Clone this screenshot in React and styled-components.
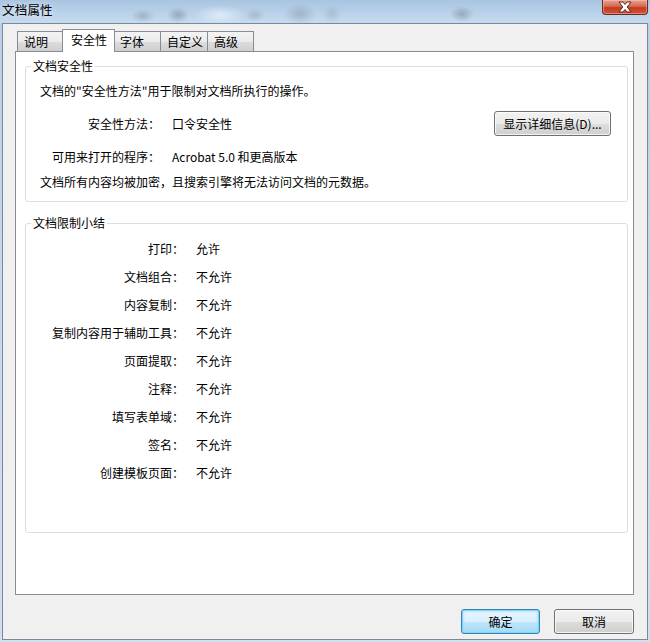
import React from "react";
import styled, { createGlobalStyle, css } from "styled-components";

const Global = createGlobalStyle`
  html, body { margin: 0; padding: 0; }
  body {
    font-family: "Noto Sans CJK SC", "Microsoft YaHei", sans-serif;
    font-size: 12px;
    color: #000;
    background: #bcd3ea;
  }
`;

const Frame = styled.div`
  width: 650px;
  height: 642px;
  display: flex;
  flex-direction: column;
  background: linear-gradient(to bottom, #b8cfe7 0%, #c3d8ee 40%, #cfe0f2 100%);
  box-sizing: border-box;
  overflow: hidden;
`;

const TitleBar = styled.div`
  height: 23px;
  flex: none;
  display: flex;
  align-items: flex-start;
  justify-content: space-between;
  padding-left: 2px;
  background:
    radial-gradient(ellipse 12px 7px at 143px 16px, rgba(90,100,115,0.3), transparent),
    radial-gradient(ellipse 11px 8px at 178px 15px, rgba(80,90,105,0.35), transparent),
    radial-gradient(ellipse 26px 10px at 220px 15px, rgba(235,245,255,0.7), transparent),
    radial-gradient(ellipse 10px 7px at 255px 15px, rgba(100,110,125,0.25), transparent),
    radial-gradient(ellipse 16px 11px at 300px 14px, rgba(90,105,125,0.28), transparent),
    radial-gradient(ellipse 10px 10px at 332px 14px, rgba(110,125,145,0.22), transparent),
    radial-gradient(ellipse 12px 8px at 462px 14px, rgba(70,80,95,0.32), transparent),
    linear-gradient(to bottom, #a9c4e0 0%, #b9d1ea 55%, #c6dbef 100%);
`;

const Title = styled.div`
  font-size: 12.5px;
  line-height: 20px;
  letter-spacing: 0.2px;
  color: #000;
  text-shadow: 0 0 6px rgba(255,255,255,0.9);
`;

const CloseButton = styled.div`
  width: 46px;
  height: 15px;
  margin-right: 2px;
  box-sizing: border-box;
  border: 1px solid #6d2a22;
  border-top: none;
  border-radius: 0 0 4px 4px;
  background: linear-gradient(to bottom, #e8a493 0%, #d6684f 45%, #c4391f 55%, #d0553a 100%);
  box-shadow: inset 0 0 0 1px rgba(255,200,190,0.45);
  display: flex;
  align-items: center;
  justify-content: center;
`;

const Client = styled.div`
  flex: 1;
  margin: 0 2px 2px 2px;
  border: 1px solid #7d8896;
  background: #f0f0f0;
  display: flex;
  flex-direction: column;
  padding: 5px 13px 5px 12px;
`;

const TabRow = styled.div`
  height: 22px;
  display: flex;
  align-items: flex-end;
  margin-left: 2px;
  position: relative;
  z-index: 1;
`;

const Tab = styled.div`
  box-sizing: border-box;
  width: ${p => p.$w}px;
  height: 20px;
  border: 1px solid #898c95;
  border-bottom: none;
  margin-left: -1px;
  padding: 2px 0 0 6px;
  line-height: 16px;
  background: linear-gradient(to bottom, #f3f3f3 0%, #ebebeb 50%, #dddddd 51%, #cfcfcf 100%);
  white-space: nowrap;
  &:first-child { margin-left: 0; }
  ${p => p.$active && css`
    height: 23px;
    margin-bottom: -1px;
    margin-left: -1px;
    margin-right: -1px;
    padding: 2px 0 0 8px;
    background: #fff;
    position: relative;
    z-index: 2;
  `}
`;

const Panel = styled.div`
  height: 544px;
  box-sizing: border-box;
  border: 1px solid #898c95;
  background: #fff;
  padding: 6px 5px 0 9px;
  display: flex;
  flex-direction: column;
  gap: 13px;
`;

const Group = styled.fieldset`
  margin: 0;
  padding: 0 0 ${p => p.$pb}px 0;
  border: 1px solid #d5dfe5;
  border-radius: 3px;
  min-width: 0;
`;

const Legend = styled.legend`
  padding: 0 2px;
  margin-left: 5px;
  line-height: 16px;
`;

const GroupBody = styled.div`
  padding-left: 14px;
  padding-right: 16px;
`;

const Line = styled.div`
  line-height: 16px;
  margin-top: ${p => p.$mt}px;
  white-space: nowrap;
`;

const InfoRow = styled.div`
  display: flex;
  align-items: center;
  height: ${p => p.$h}px;
  margin-top: ${p => p.$mt}px;
  line-height: 16px;
`;

const InfoLabel = styled.div`
  width: 120px;
  text-align: right;
  flex: none;
  white-space: nowrap;
`;

const InfoValue = styled.div`
  margin-left: 12px;
  flex: 1;
  white-space: nowrap;
`;

const Button = styled.button`
  font: inherit;
  font-size: 12px;
  color: #000;
  box-sizing: border-box;
  width: ${p => p.$w}px;
  height: ${p => p.$h || 25}px;
  padding: 0;
  border: 1px solid #707070;
  border-radius: 3px;
  background: linear-gradient(to bottom, #f2f2f2 0%, #ebebeb 50%, #dddddd 51%, #cfcfcf 100%);
  box-shadow: inset 0 0 0 1px rgba(255,255,255,0.75);
  line-height: 16px;
  ${p => p.$default && css`
    border-color: #3c7fb1;
    background: linear-gradient(to bottom, #eaf6fd 0%, #d9f0fc 50%, #bee6fd 51%, #a7d9f5 100%);
    box-shadow: inset 0 0 0 1px #7fd6f8, inset 0 0 2px 2px rgba(140,225,255,0.6);
  `}
`;

const Summary = styled.div`
  display: grid;
  grid-template-columns: 158px 1fr;
  column-gap: 12px;
  grid-auto-rows: 28px;
  align-items: center;
  padding-top: 4px;
  line-height: 16px;
`;

const SumLabel = styled.div`
  text-align: right;
  white-space: nowrap;
`;

const SumValue = styled.div`
  white-space: nowrap;
`;

const Footer = styled.div`
  display: flex;
  justify-content: flex-end;
  gap: 14px;
  margin-top: 14px;
`;

const tabs = [
  { label: "说明", w: 46 },
  { label: "安全性", w: 53, active: true },
  { label: "字体", w: 48 },
  { label: "自定义", w: 48 },
  { label: "高级", w: 47 },
];

const rows = [
  ["打印：", "允许"],
  ["文档组合：", "不允许"],
  ["内容复制：", "不允许"],
  ["复制内容用于辅助工具：", "不允许"],
  ["页面提取：", "不允许"],
  ["注释：", "不允许"],
  ["填写表单域：", "不允许"],
  ["签名：", "不允许"],
  ["创建模板页面：", "不允许"],
];

export default function App() {
  return (
    <>
      <Global />
      <Frame>
        <TitleBar>
          <Title>文档属性</Title>
          <CloseButton>
            <svg width="16" height="12" viewBox="0 0 16 12">
              <path
                d="M2 1 H6 L8 3.5 L10 1 H14 L10.2 6 L14 11 H10 L8 8.5 L6 11 H2 L5.8 6 Z"
                fill="#fff"
                stroke="#5a2a22"
                strokeWidth="1"
                strokeLinejoin="round"
              />
            </svg>
          </CloseButton>
        </TitleBar>
        <Client>
          <TabRow>
            {tabs.map(t => (
              <Tab key={t.label} $w={t.w} $active={t.active}>{t.label}</Tab>
            ))}
          </TabRow>
          <Panel>
            <Group $pb={11}>
              <Legend>文档安全性</Legend>
              <GroupBody>
                <Line $mt={9}>文档的"安全性方法"用于限制对文档所执行的操作。</Line>
                <InfoRow $h={25} $mt={12}>
                  <InfoLabel>安全性方法：</InfoLabel>
                  <InfoValue>口令安全性</InfoValue>
                  <Button $w={117} $h={25}>显示详细信息(D)...</Button>
                </InfoRow>
                <InfoRow $h={16} $mt={13}>
                  <InfoLabel>可用来打开的程序：</InfoLabel>
                  <InfoValue>Acrobat 5.0 和更高版本</InfoValue>
                </InfoRow>
                <Line $mt={9}>文档所有内容均被加密，且搜索引擎将无法访问文档的元数据。</Line>
              </GroupBody>
            </Group>
            <Group $pb={45}>
              <Legend>文档限制小结</Legend>
              <Summary>
                {rows.map(([l, v]) => (
                  <React.Fragment key={l}>
                    <SumLabel>{l}</SumLabel>
                    <SumValue>{v}</SumValue>
                  </React.Fragment>
                ))}
              </Summary>
            </Group>
          </Panel>
          <Footer>
            <Button $w={79} $default>确定</Button>
            <Button $w={80}>取消</Button>
          </Footer>
        </Client>
      </Frame>
    </>
  );
}
